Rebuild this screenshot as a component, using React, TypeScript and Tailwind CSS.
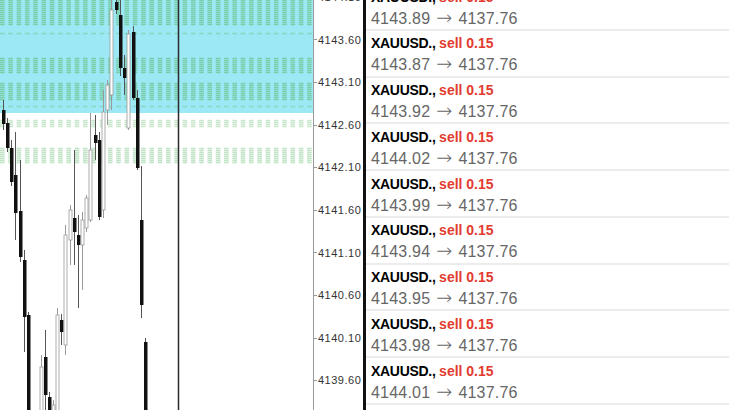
import React from 'react'

type Candle = { x: number; hi: number; lo: number; top: number; bot: number; bear: boolean }

// candles in chart pixel coordinates (y grows downward)
const candles: Candle[] = [
  { x: 3, hi: 100, lo: 130, top: 110, bot: 124, bear: true },
  { x: 7, hi: 118, lo: 152, top: 123, bot: 148, bear: true },
  { x: 11, hi: 140, lo: 186, top: 148, bot: 182, bear: true },
  { x: 15, hi: 132, lo: 240, top: 175, bot: 213, bear: true },
  { x: 20, hi: 160, lo: 262, top: 211, bot: 257, bear: true },
  { x: 24, hi: 250, lo: 352, top: 260, bot: 317, bear: true },
  { x: 28, hi: 312, lo: 412, top: 315, bot: 412, bear: true },
  { x: 41, hi: 355, lo: 412, top: 367, bot: 412, bear: false },
  { x: 45, hi: 330, lo: 412, top: 357, bot: 395, bear: true },
  { x: 49, hi: 392, lo: 412, top: 397, bot: 412, bear: true },
  { x: 53, hi: 400, lo: 412, top: 405, bot: 412, bear: false },
  { x: 57, hi: 308, lo: 412, top: 315, bot: 412, bear: false },
  { x: 61, hi: 314, lo: 345, top: 320, bot: 332, bear: true },
  { x: 65, hi: 225, lo: 355, top: 235, bot: 345, bear: false },
  { x: 70, hi: 205, lo: 265, top: 210, bot: 240, bear: false },
  { x: 74, hi: 150, lo: 265, top: 218, bot: 232, bear: true },
  { x: 78, hi: 215, lo: 308, top: 235, bot: 245, bear: true },
  { x: 82, hi: 212, lo: 290, top: 220, bot: 245, bear: false },
  { x: 86, hi: 195, lo: 232, top: 198, bot: 228, bear: false },
  { x: 90, hi: 113, lo: 222, top: 150, bot: 220, bear: false },
  { x: 95, hi: 115, lo: 160, top: 135, bot: 143, bear: true },
  { x: 99, hi: 132, lo: 220, top: 140, bot: 217, bear: true },
  { x: 103, hi: 90, lo: 218, top: 112, bot: 210, bear: false },
  { x: 107, hi: 80, lo: 125, top: 85, bot: 110, bear: false },
  { x: 111, hi: 0, lo: 110, top: 10, bot: 95, bear: false },
  { x: 116, hi: 0, lo: 14, top: 2, bot: 10, bear: true },
  { x: 120, hi: 0, lo: 76, top: 15, bot: 68, bear: true },
  { x: 124, hi: 55, lo: 95, top: 68, bot: 78, bear: true },
  { x: 128, hi: 30, lo: 130, top: 34, bot: 128, bear: false },
  { x: 133, hi: 26, lo: 100, top: 32, bot: 98, bear: true },
  { x: 137, hi: 90, lo: 170, top: 98, bot: 168, bear: true },
  { x: 141, hi: 166, lo: 318, top: 220, bot: 305, bear: true },
  { x: 145, hi: 338, lo: 412, top: 342, bot: 412, bear: true },
]

// groups of stacked dashed level lines: [y from, y to, opacity]
const levelBands: [number, number, number][] = [
  [0, 24, 0.55],
  [33, 33, 0.4],
  [58, 73, 0.55],
  [83, 100, 0.55],
  [106, 106, 0.35],
  [120, 127, 0.35],
  [148, 162, 0.4],
]

const axisLabels = [
  '4144.10', '4143.60', '4143.10', '4142.60', '4142.10',
  '4141.60', '4141.10', '4140.60', '4140.10', '4139.60',
]

const trades = [
  '4143.89', '4143.87', '4143.92', '4144.02', '4143.99',
  '4143.94', '4143.95', '4143.98', '4144.01',
]

function Chart() {
  const lines: number[][] = []
  levelBands.forEach(([a, b, o]) => {
    for (let y = a; y <= b; y += 2) lines.push([y + 0.5, o])
  })
  return (
    <svg width="313" height="410" viewBox="0 0 313 410" className="block">
      <rect x="0" y="0" width="313" height="113" fill="#9ce9f5" />
      {lines.map(([y, o], i) => (
        <line
          key={i}
          x1="0"
          x2="313"
          y1={y}
          y2={y}
          stroke="#62b86e"
          strokeOpacity={o}
          strokeWidth="1.4"
          strokeDasharray="4.6 3.7"
        />
      ))}
      <line x1="178.5" x2="178.5" y1="0" y2="410" stroke="#2b2b2b" strokeWidth="1.5" />
      {candles.map((c, i) => (
        <g key={i}>
          <line
            x1={c.x + 0.5}
            x2={c.x + 0.5}
            y1={c.hi}
            y2={c.lo}
            stroke={c.bear ? '#555' : '#9a9a9a'}
            strokeWidth="1"
          />
          {c.bear ? (
            <rect x={c.x - 1} y={c.top} width="3.5" height={c.bot - c.top} fill="#111" />
          ) : (
            <rect
              x={c.x - 1}
              y={c.top}
              width="3"
              height={c.bot - c.top}
              fill="#fff"
              stroke="#9a9a9a"
              strokeWidth="0.8"
            />
          )}
        </g>
      ))}
    </svg>
  )
}

export default function App() {
  return (
    <div
      className="w-[729px] h-[410px] overflow-hidden bg-white flex"
      style={{ fontFamily: '"Liberation Sans", Arial, sans-serif' }}
    >
      <div className="w-[313px] h-[410px] shrink-0">
        <Chart />
      </div>

      <div className="w-[50px] shrink-0 border-l border-[#9a9a9a] h-[410px] overflow-hidden">
        <div className="-mt-[24px] flex flex-col">
          {axisLabels.map((l) => (
            <div key={l} className="h-[42.6px] flex items-center">
              <span className="w-[3px] h-px bg-[#9a9a9a]" />
              <span className="ml-[1px] text-[11px] tracking-[0.5px] text-[#333]">{l}</span>
            </div>
          ))}
        </div>
      </div>

      <div className="w-[3px] shrink-0 bg-[#111]" />

      <div className="flex-1 h-[410px] overflow-hidden">
        <div className="-mt-[16px] flex flex-col">
          {trades.map((p, i) => (
            <div key={i} className="h-[46.75px] flex flex-col">
              <div className="flex-1 pl-[5px] pt-[2.5px]">
                <div className="h-[21px] leading-[21px] text-[14px] font-bold tracking-[-0.3px] text-black">
                  XAUUSD., <span className="text-[#e23b30] tracking-normal">sell 0.15</span>
                </div>
                <div className="h-[21px] leading-[21px] text-[16px] tracking-[0.2px] text-[#666]">
                  {p}
                  <span className="mx-[6px] font-['DejaVu_Sans'] text-[19px] leading-none font-light">→</span>
                  4137.76
                </div>
              </div>
              <div className="h-[2px] bg-[#ececec]" />
            </div>
          ))}
        </div>
      </div>
    </div>
  )
}
